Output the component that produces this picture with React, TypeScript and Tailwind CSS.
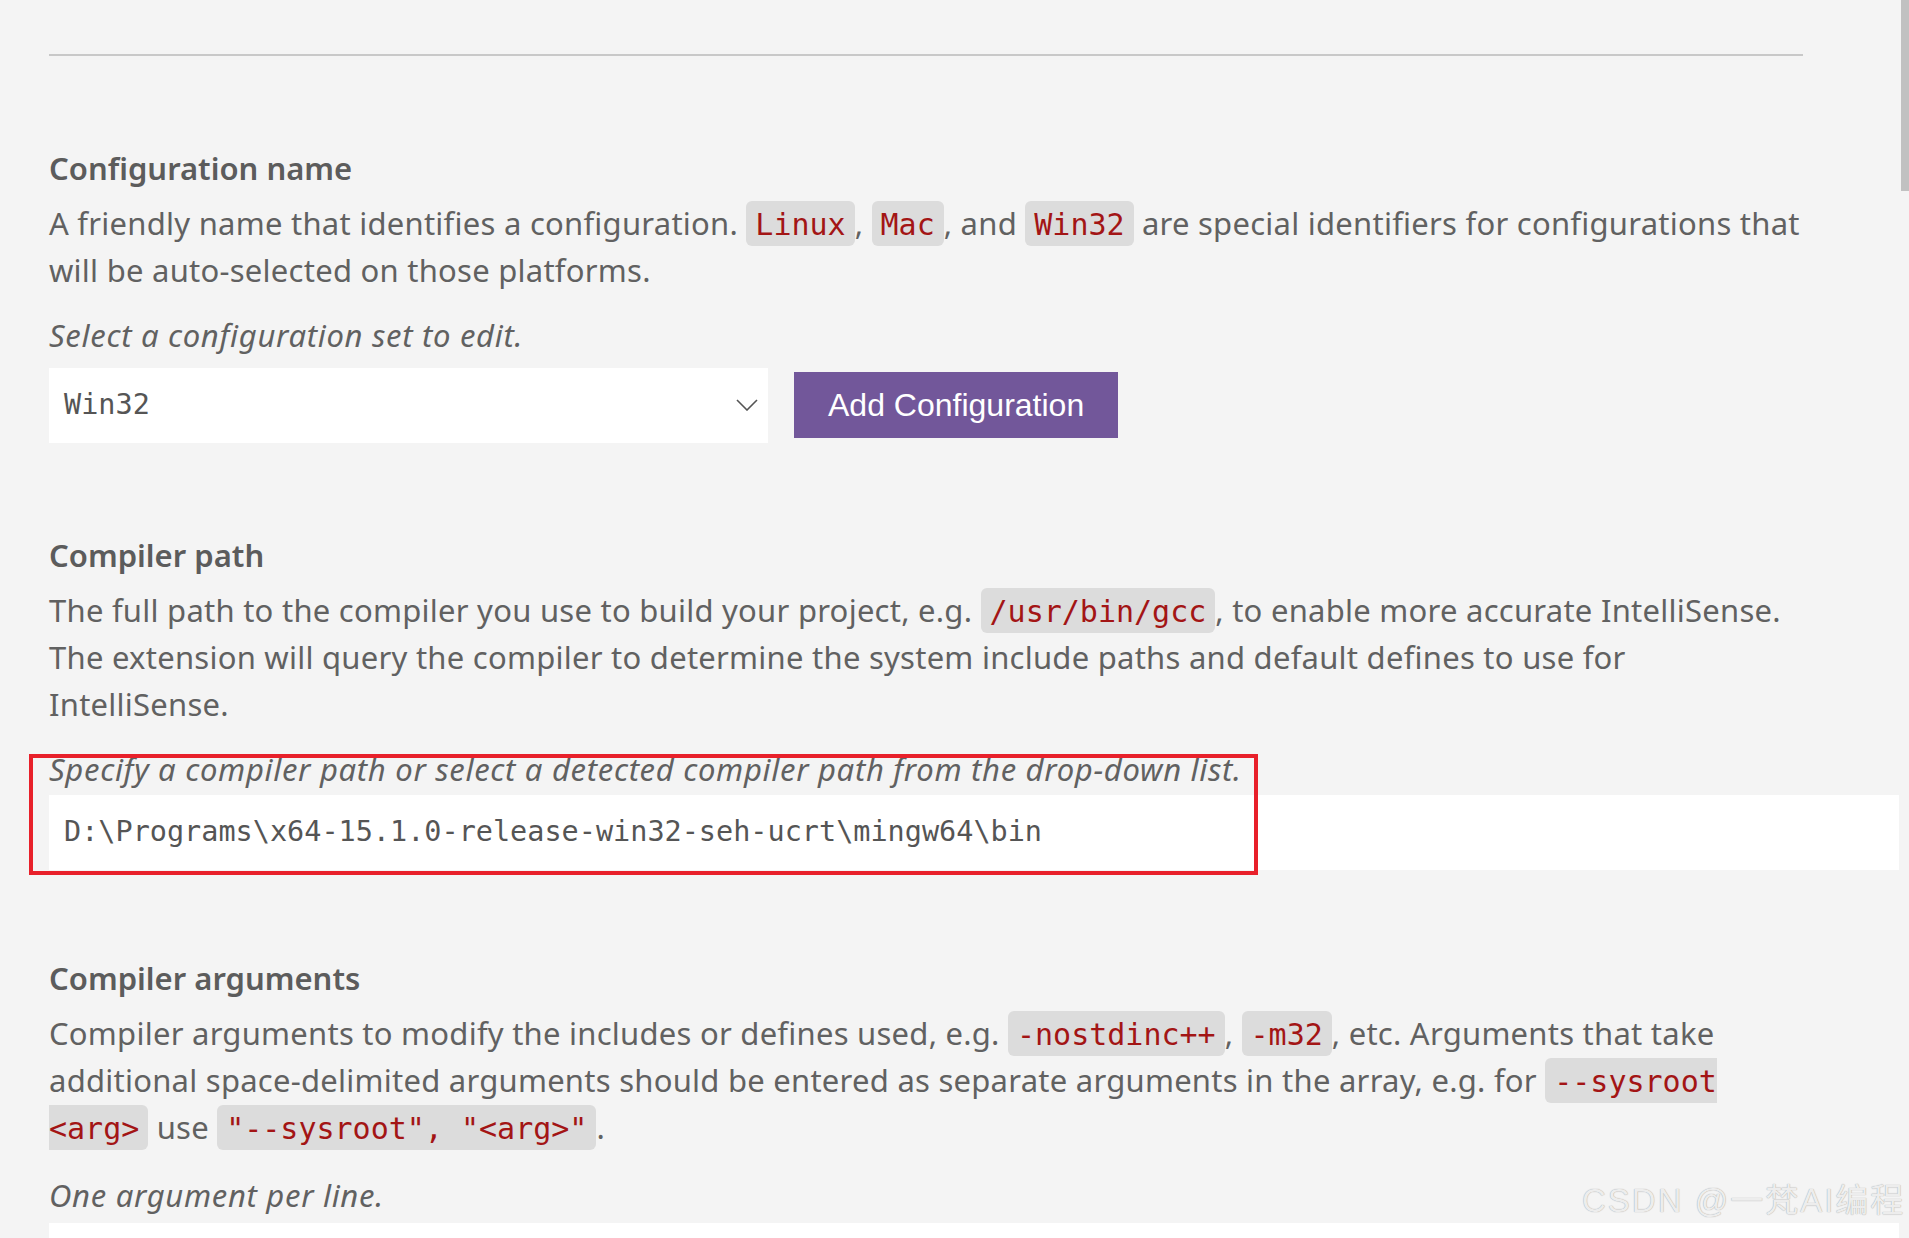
import type { ReactNode } from "react";

const bodyText =
	"whitespace-nowrap font-['Noto_Sans',sans-serif] text-[31px] leading-[47px] tracking-[0.25px] text-[#616161]";
const headingText =
	"font-['Noto_Sans',sans-serif] text-[31px] font-semibold leading-[47px] text-[#5c5c5c]";
const hintText =
	"whitespace-nowrap font-['Noto_Sans',sans-serif] text-[31px] italic leading-[47px] tracking-[0.7px] text-[#616161]";

function Code({ children }: { children: ReactNode }) {
	return (
		<code className="rounded-[6px] bg-[#dcdcdc] px-[9px] pt-[6px] pb-[4px] font-['DejaVu_Sans_Mono',monospace] text-[30px] leading-none tracking-normal text-[#a31515]">
			{children}
		</code>
	);
}

function ChevronDown() {
	return (
		<svg width="22" height="12" viewBox="0 0 22 12" fill="none">
			<path d="M1 1l10 10L21 1" stroke="#555" strokeWidth="1.6" />
		</svg>
	);
}

export default function App() {
	return (
		<div className="relative h-[1238px] w-full overflow-hidden bg-[#f4f4f4]">
			<div className="pl-[49px] pt-[54px]">
				<div className="h-[2px] w-[1754px] bg-[#c8c8c8]" />

				{/* Configuration name */}
				<h2 className={`mt-[88.5px] mb-[8px] ${headingText}`}>Configuration name</h2>
				<p className={bodyText}>
					A friendly name that identifies a configuration. <Code>Linux</Code>,{" "}
					<Code>Mac</Code>, and <Code>Win32</Code> are special identifiers for
					configurations that
					<br />
					will be auto-selected on those platforms.
				</p>
				<p className={`mt-[18px] ${hintText}`}>Select a configuration set to edit.</p>
				<div className="mt-[9px] flex items-center gap-[26px]">
					<div className="flex h-[75px] w-[719px] items-center justify-between bg-white pl-[15px] pr-[10px]">
						<span className="font-['DejaVu_Sans_Mono',monospace] text-[28.5px] text-[#555]">
							Win32
						</span>
						<ChevronDown />
					</div>
					<button
						type="button"
						className="h-[66px] bg-[#72579a] px-[34px] font-['Liberation_Sans',Arial,sans-serif] text-[32px] text-white"
					>
						Add Configuration
					</button>
				</div>

				{/* Compiler path */}
				<h2 className={`mt-[89.5px] mb-[8px] ${headingText}`}>Compiler path</h2>
				<p className={bodyText}>
					The full path to the compiler you use to build your project, e.g.{" "}
					<Code>/usr/bin/gcc</Code>, to enable more accurate IntelliSense.
					<br />
					The extension will query the compiler to determine the system include paths
					and default defines to use for
					<br />
					IntelliSense.
				</p>
				<p className={`mt-[18px] ${hintText}`}>
					Specify a compiler path or select a detected compiler path from the drop-down
					list.
				</p>
				<div className="mt-[2px] flex h-[75px] w-[1850px] items-center bg-white pl-[15px]">
					<span className="font-['DejaVu_Sans_Mono',monospace] text-[28.5px] text-[#555]">
						D:\Programs\x64-15.1.0-release-win32-seh-ucrt\mingw64\bin
					</span>
				</div>

				{/* Compiler arguments */}
				<h2 className={`mt-[84.5px] mb-[8px] ${headingText}`}>Compiler arguments</h2>
				<p className={bodyText}>
					Compiler arguments to modify the includes or defines used, e.g.{" "}
					<Code>-nostdinc++</Code>, <Code>-m32</Code>, etc. Arguments that take
					<br />
					additional space-delimited arguments should be entered as separate arguments
					in the array, e.g. for{" "}
					<Code>
						--sysroot
						<br />
						&lt;arg&gt;
					</Code>{" "}
					use <Code>"--sysroot", "&lt;arg&gt;"</Code>.
				</p>
				<p className={`mt-[21px] ${hintText}`}>One argument per line.</p>
				<div className="mt-[4.5px] h-[80px] w-[1850px] bg-white" />
			</div>

			{/* annotation box */}
			<div className="absolute left-[29px] top-[754px] h-[121px] w-[1229px] border-[4px] border-[#e8202a]" />

			{/* scrollbar thumb */}
			<div className="absolute right-0 top-0 h-[191px] w-[8px] bg-[#c1c1c1]" />

			{/* watermark */}
			<div className="absolute left-[1582px] top-[1181px] whitespace-nowrap font-['Liberation_Sans','Noto_Sans_CJK_SC',sans-serif] text-[33px] leading-[40px] tracking-[2px] text-[#ededed] [text-shadow:0_0_1px_#8f8f8f]">
				CSDN @一梵AI编程
			</div>
		</div>
	);
}
